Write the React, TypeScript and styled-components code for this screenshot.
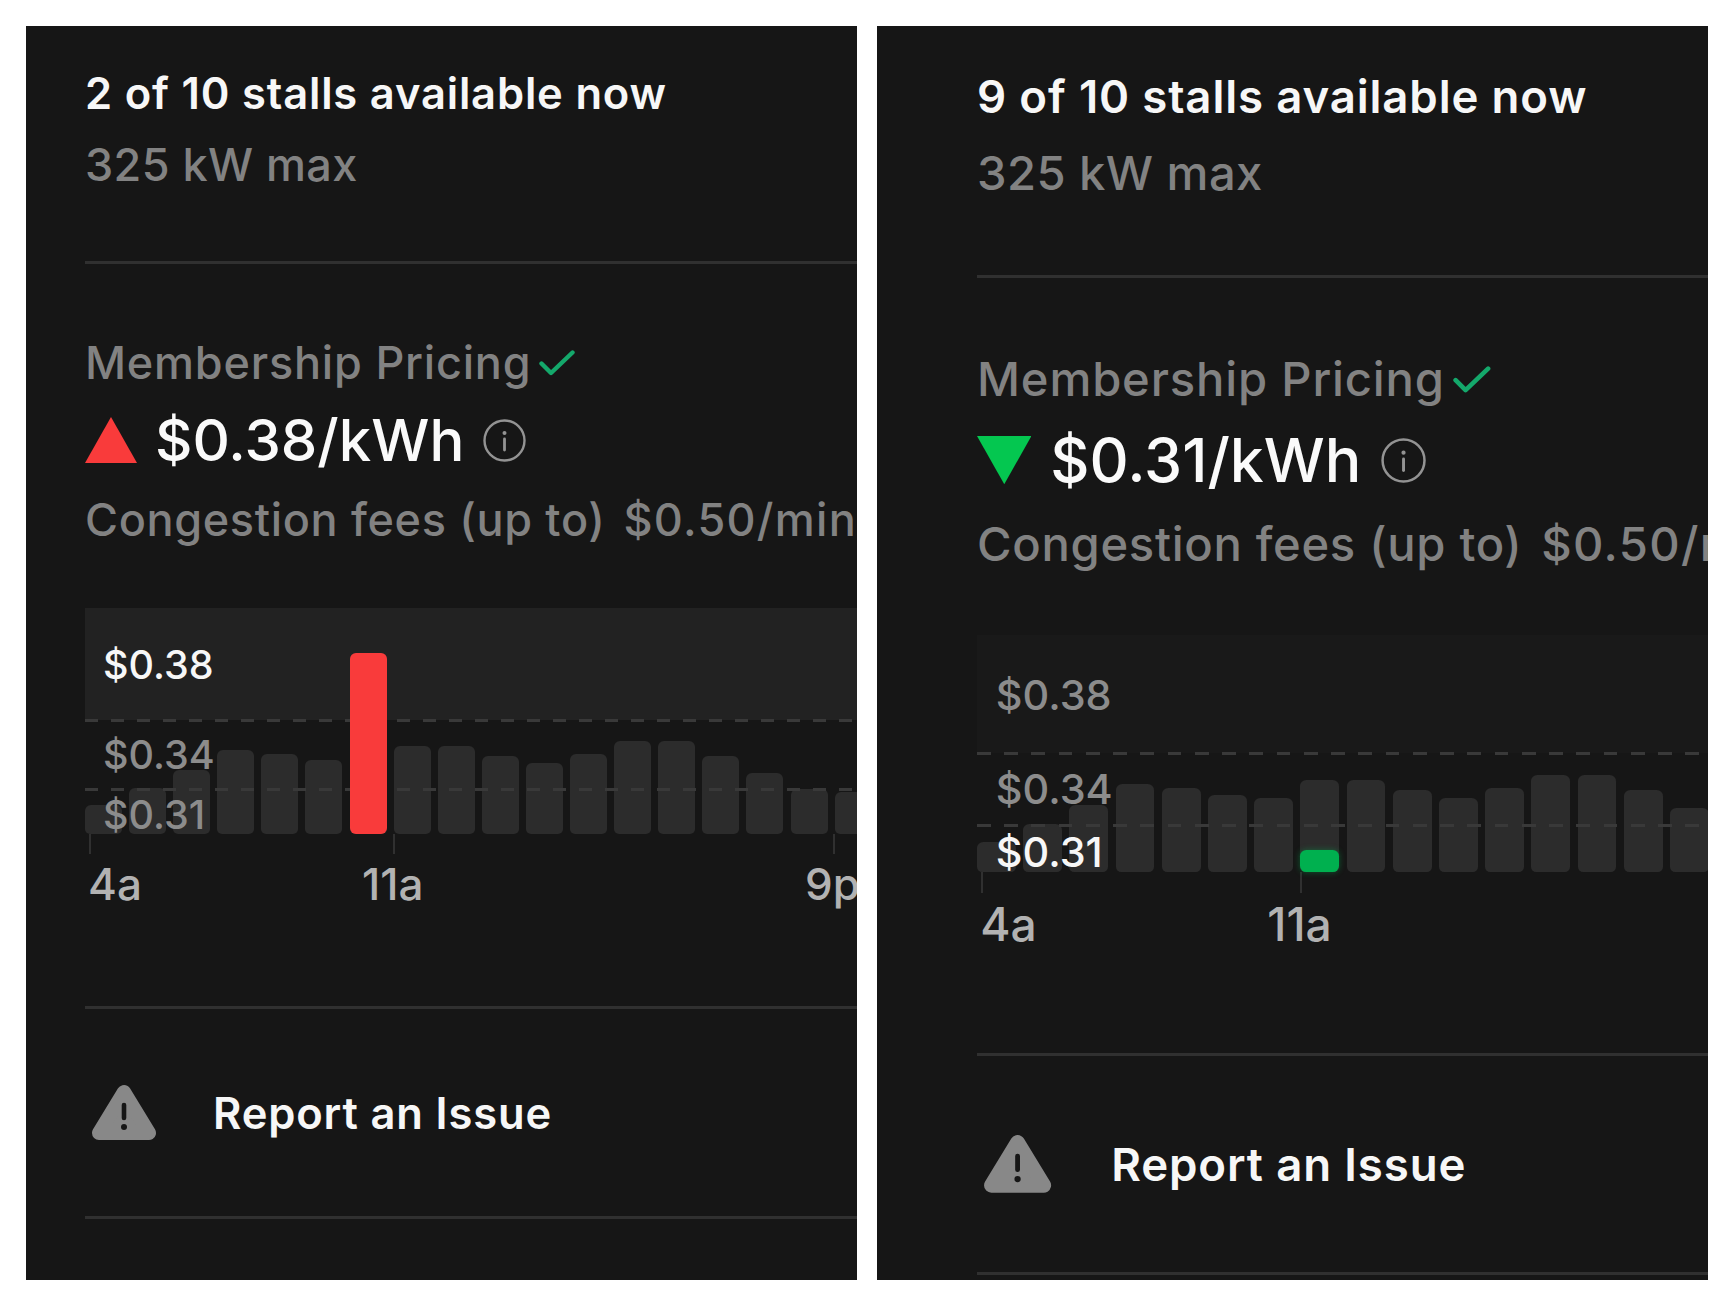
import styled, { createGlobalStyle } from "styled-components";

// every length is written for the left panel, --u scales it up for the right one
const u = (n: number) => `calc(${n}px * var(--u))`;

const GlobalStyle = createGlobalStyle`
	html,
	body {
		margin: 0;
		background: #fff;
	}
	body {
		font-family: Inter, "Liberation Sans", sans-serif;
		-webkit-font-smoothing: antialiased;
	}
`;

const Page = styled.div`
	display: flex;
	gap: 20px;
	width: 1730px;
	height: 1300px;
	padding: 26px 22px 20px 26px;
	box-sizing: border-box;
`;

const Panel = styled.section<{ $scale: number; $inset: number }>`
	--u: ${(p) => p.$scale};
	width: 831px;
	height: 1254px;
	overflow: hidden;
	flex: none;
	box-sizing: border-box;
	padding-left: ${(p) => p.$inset}px;
	background: #161616;
`;

const Title = styled.div<{ $top: number }>`
	padding-top: ${(p) => p.$top}px;
	font-size: ${u(43.5)};
	line-height: ${u(56)};
	font-weight: 600;
	letter-spacing: ${u(0.82)};
	color: #f7f7f7;
`;

const Muted = styled.div<{ $top: number; $track: number }>`
	display: flex;
	align-items: center;
	margin-top: ${(p) => p.$top}px;
	font-size: ${u(45)};
	line-height: ${u(52)};
	font-weight: 500;
	letter-spacing: ${(p) => u(p.$track)};
	color: #828282;
	white-space: nowrap;
`;

const Divider = styled.div<{ $top: number }>`
	height: ${u(3)};
	margin-top: ${(p) => p.$top}px;
	background: #303030;
`;

const CheckMark = styled.svg`
	width: ${u(36)};
	height: ${u(26)};
	margin-left: ${u(8)};
	flex: none;
`;

const PriceRow = styled.div`
	display: flex;
	align-items: center;
	margin-top: ${u(19)};
	height: ${u(64)};
`;

const Arrow = styled.svg`
	width: ${u(52)};
	height: ${u(46)};
	flex: none;
`;

const Price = styled.div`
	margin-left: ${u(18)};
	font-size: ${u(58)};
	line-height: ${u(64)};
	font-weight: 500;
	color: #fafafa;
	white-space: nowrap;
`;

const InfoIcon = styled.svg`
	width: ${u(43)};
	height: ${u(43)};
	margin-left: ${u(19)};
	flex: none;
`;

const Fee = styled.span`
	margin-left: ${u(18)};
	letter-spacing: ${u(1.3)};
`;

const Chart = styled.div<{ $top: number }>`
	position: relative;
	height: ${u(226)};
	margin-top: ${(p) => p.$top}px;
`;

const Band = styled.div<{ $fill: string }>`
	position: absolute;
	top: 0;
	left: 0;
	right: 0;
	height: ${u(112)};
	background: ${(p) => p.$fill};
`;

const Bars = styled.div`
	position: absolute;
	inset: 0;
	display: flex;
	align-items: flex-end;
	gap: ${u(7.1)};
`;

const Bar = styled.div<{ $height: number }>`
	position: relative;
	flex: none;
	width: ${u(37)};
	height: ${(p) => u(p.$height)};
	border-radius: ${u(6)} ${u(6)} ${u(5)} ${u(5)};
	background: #2c2c2c;
`;

const BarFill = styled.div<{ $height: number; $fill: string; $glow: boolean }>`
	position: absolute;
	left: 0;
	right: 0;
	bottom: 0;
	z-index: 3;
	height: ${(p) => u(p.$height)};
	border-radius: ${u(6)};
	background: ${(p) => p.$fill};
	box-shadow: ${(p) => (p.$glow ? "0 0 6px rgba(0, 176, 80, 0.45)" : "none")};
`;

const DashLine = styled.div<{ $top: number }>`
	position: absolute;
	left: 0;
	right: 0;
	top: ${(p) => u(p.$top)};
	height: ${u(3)};
	z-index: 2;
	background: repeating-linear-gradient(
		90deg,
		#393939 0,
		#393939 ${u(13)},
		transparent ${u(13)},
		transparent ${u(26)}
	);
`;

const PriceTag = styled.div<{ $top: number; $active: boolean }>`
	position: absolute;
	left: ${u(18)};
	top: ${(p) => u(p.$top)};
	z-index: 2;
	font-size: ${u(39.5)};
	line-height: ${u(44)};
	font-weight: 500;
	color: ${(p) => (p.$active ? "#f7f7f7" : "#8c8c8c")};
`;

const Axis = styled.div`
	position: relative;
	height: ${u(76)};
`;

const Tick = styled.div<{ $x: number }>`
	position: absolute;
	top: 0;
	left: ${(p) => u(p.$x)};
	width: ${u(2)};
	height: ${u(20)};
	background: #303030;
`;

const AxisLabel = styled.div<{ $x: number }>`
	position: absolute;
	top: ${u(24)};
	left: ${(p) => u(p.$x)};
	font-size: ${u(44)};
	line-height: ${u(52)};
	font-weight: 500;
	color: #b2b2b2;
`;

const Report = styled.div`
	display: flex;
	align-items: center;
	margin-top: ${u(76)};
	height: ${u(56)};
`;

const WarnIcon = styled.svg`
	width: ${u(66)};
	height: ${u(60)};
	margin-left: ${u(6)};
	flex: none;
`;

const ReportText = styled.div`
	margin-left: ${u(56)};
	font-size: ${u(43.5)};
	line-height: ${u(56)};
	font-weight: 600;
	letter-spacing: ${u(0.85)};
	color: #f7f7f7;
`;

const HEIGHTS = [29, 46, 64, 84, 80, 74, 71, 88, 88, 78, 71, 80, 93, 93, 78, 61, 45, 42, 42, 42];
const TAGS = [
	{ value: "$0.38", top: 35 },
	{ value: "$0.34", top: 125 },
	{ value: "$0.31", top: 185 },
];
const AXIS = [
	{ label: "4a", tick: 4, x: 3 },
	{ label: "11a", tick: 308, x: 277 },
	{ label: "9p", tick: 748, x: 720 },
];

type StationProps = {
	scale: number;
	inset: number;
	stalls: number;
	price: string;
	activeTag: string;
	band: string;
	trend: "up" | "down";
	barIndex: number;
	barHeight: number;
	fillHeight: number;
	fill: string;
	// pixel gaps that don't follow the panel's scale
	gaps: { title: number; sub: number; rule: number; pricing: number; fees: number; chart: number; axis: number; end: number };
};

function Station(props: StationProps) {
	const { scale, inset, stalls, price, activeTag, band, trend, barIndex, barHeight, fillHeight, fill, gaps } = props;
	return (
		<Panel $scale={scale} $inset={inset}>
			<Title $top={gaps.title}>{stalls} of 10 stalls available now</Title>
			<Muted $top={gaps.sub} $track={0.41}>
				325 kW max
			</Muted>
			<Divider $top={gaps.rule} />
			<Muted $top={gaps.pricing} $track={0.8}>
				Membership Pricing
				<CheckMark viewBox="0 0 36 26" fill="none">
					<path d="M2.5 13.5 L12 23 L33.5 2.5" stroke="#14a86b" strokeWidth="4.4" strokeLinecap="round" strokeLinejoin="round" />
				</CheckMark>
			</Muted>
			<PriceRow>
				<Arrow viewBox="0 0 52 46">
					{trend === "up" ? <path d="M26 0 L52 46 H0 Z" fill="#f93b3b" /> : <path d="M0 0 H52 L26 46 Z" fill="#04c750" />}
				</Arrow>
				<Price>{price}/kWh</Price>
				<InfoIcon viewBox="0 0 43 43" fill="none">
					<circle cx="21.5" cy="21.5" r="20" stroke="#939393" strokeWidth="2.4" />
					<circle cx="21.5" cy="14" r="2" fill="#939393" />
					<path d="M21.5 20 V31" stroke="#939393" strokeWidth="2.8" strokeLinecap="round" />
				</InfoIcon>
			</PriceRow>
			<Muted $top={gaps.fees} $track={0.66}>
				Congestion fees (up to)
				<Fee>$0.50/min</Fee>
			</Muted>
			<Chart $top={gaps.chart}>
				<Band $fill={band} />
				<Bars>
					{HEIGHTS.map((height, i) => (
						<Bar key={i} $height={i === barIndex ? barHeight : height}>
							{i === barIndex && <BarFill $height={fillHeight} $fill={fill} $glow={trend === "down"} />}
						</Bar>
					))}
				</Bars>
				<DashLine $top={111} />
				<DashLine $top={180} />
				{TAGS.map((tag) => (
					<PriceTag key={tag.value} $top={tag.top} $active={tag.value === activeTag}>
						{tag.value}
					</PriceTag>
				))}
			</Chart>
			<Axis>
				{AXIS.map((item) => (
					<div key={item.label}>
						<Tick $x={item.tick} />
						<AxisLabel $x={item.x}>{item.label}</AxisLabel>
					</div>
				))}
			</Axis>
			<Divider $top={gaps.axis} />
			<Report>
				<WarnIcon viewBox="0 0 66 60">
					<path d="M33 9 L58 50 H8 Z" fill="#888" stroke="#888" strokeWidth="14" strokeLinejoin="round" />
					<path d="M33 22 V35" stroke="#161616" strokeWidth="4.6" strokeLinecap="round" />
					<circle cx="33" cy="44" r="3" fill="#161616" />
				</WarnIcon>
				<ReportText>Report an Issue</ReportText>
			</Report>
			<Divider $top={gaps.end} />
		</Panel>
	);
}

export default function App() {
	return (
		<Page>
			<GlobalStyle />
			<Station
				scale={1}
				inset={59}
				stalls={2}
				price="$0.38"
				activeTag="$0.38"
				band="#222222"
				trend="up"
				barIndex={6}
				barHeight={181}
				fillHeight={181}
				fill="#f93b3b"
				gaps={{ title: 39, sub: 18, rule: 70, pricing: 73, fees: 22, chart: 62, axis: 96, end: 75 }}
			/>
			<Station
				scale={1.048}
				inset={100}
				stalls={9}
				price="$0.31"
				activeTag="$0.31"
				band="#191919"
				trend="down"
				barIndex={7}
				barHeight={88}
				fillHeight={21}
				fill="#00b04f"
				gaps={{ title: 42, sub: 19, rule: 75, pricing: 74, fees: 23, chart: 64, axis: 101, end: 78 }}
			/>
		</Page>
	);
}
